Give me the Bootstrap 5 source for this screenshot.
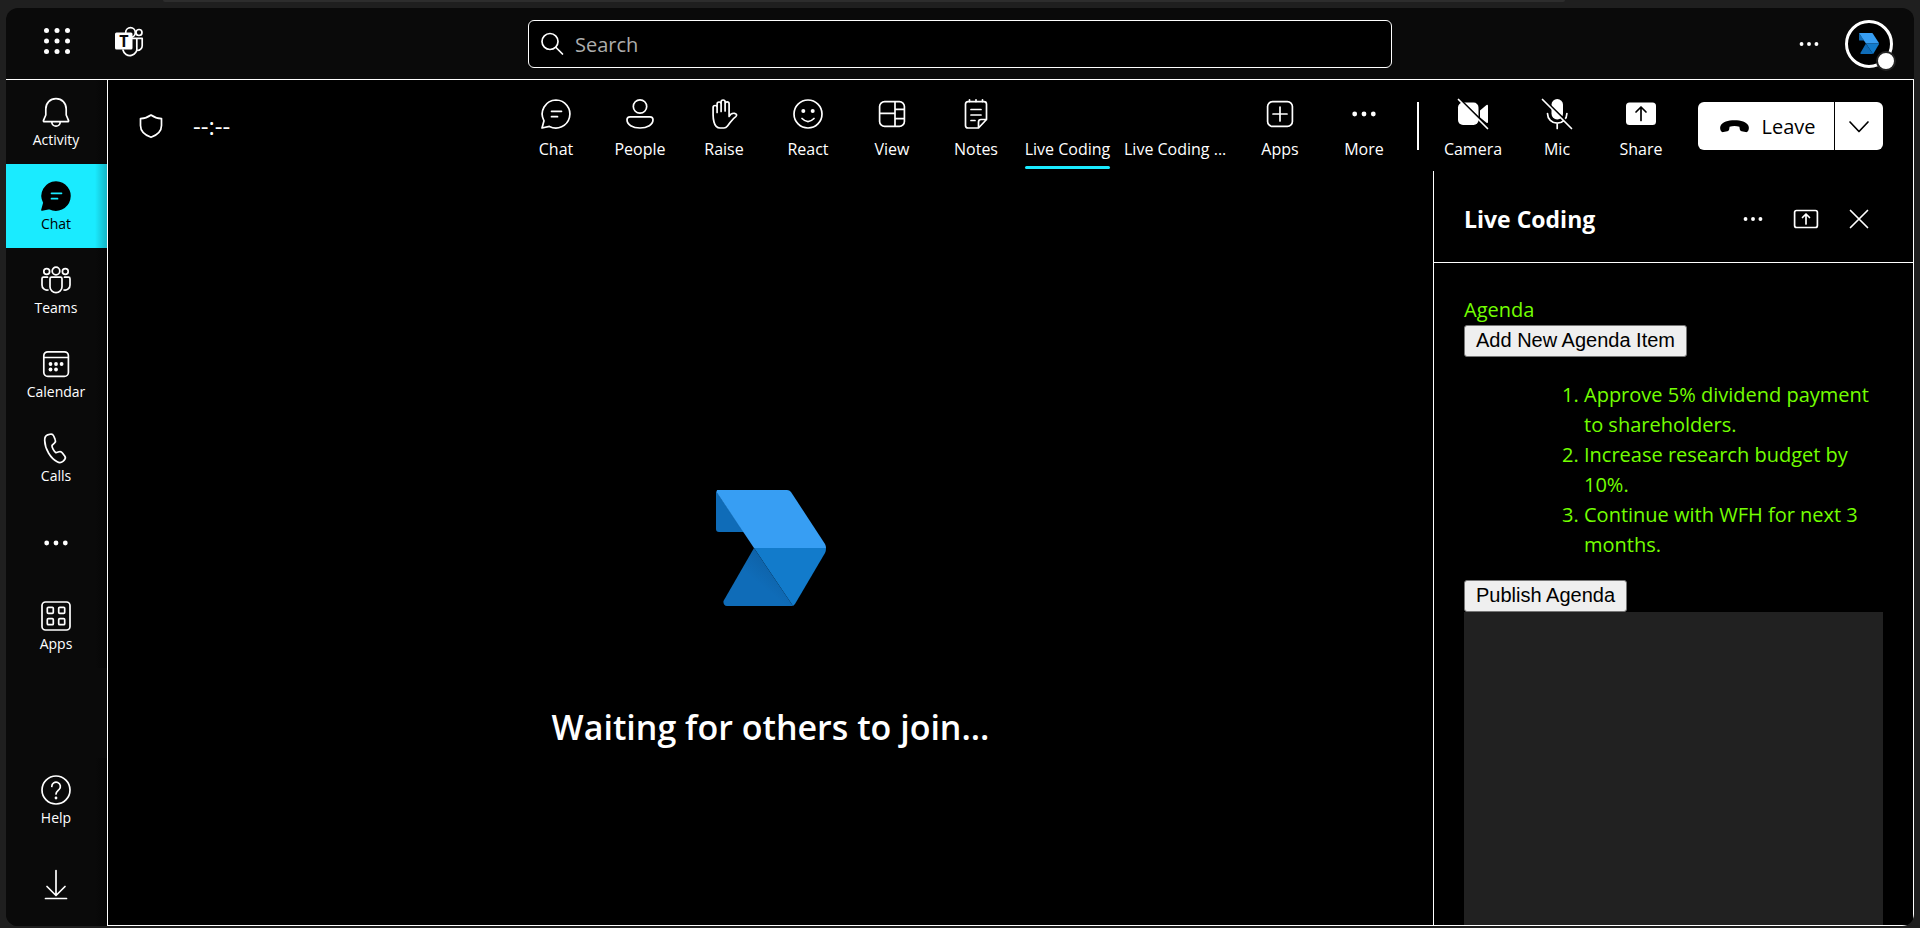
<!DOCTYPE html>
<html lang="en" data-bs-theme="dark">
<head>
<meta charset="utf-8">
<meta name="viewport" content="width=device-width, initial-scale=1">
<title>Live Coding meeting</title>
<link href="https://cdn.jsdelivr.net/npm/bootstrap@5.3.0/dist/css/bootstrap.min.css" rel="stylesheet">
<style>
  body { background: #1f1f1f; color: #fff; font-family: "Open Sans", "Noto Sans", sans-serif; font-size: 20px; line-height: 30px; }
  button { font-family: inherit; }
  svg { display: block; flex: none; }
  .ico { width: 30px; height: 30px; fill: none; stroke: currentColor; stroke-width: 1.7; stroke-linecap: round; stroke-linejoin: round; overflow: visible; }
  .ico .solid { fill: currentColor; stroke: none; }
  .ico-sm { width: 24px; height: 24px; }
  .plain { background: none; border: 0; padding: 0; color: inherit; }

  .window-strip { height: 2px; margin: 0 18.5% 6px 8.5%; background: #2d2d2d; border-radius: 0 0 8px 8px; }
  .app-window { margin: 0 6px 2px; background: #0a0a0a; border-radius: 12px; }

  .topbar { display: grid; grid-template-columns: 1fr auto 1fr; height: 72px; border-bottom: 1px solid #fff; }
  .topbar-start { padding: 0 0 6px 36px; gap: 42px; }
  .topbar-end { padding-right: 21px; gap: 24px; }
  .search-box { width: 864px; height: 48px; padding: 0 12px; gap: 10px; background: #000; border: 1px solid #fff; border-radius: 6px; }
  .search-box input { background: none; border: 0; outline: 0; color: #fff; padding: 2px 0 0; font-size: 20px; }
  .search-box input::placeholder { color: #adadad; opacity: 1; }
  .avatar { width: 48px; height: 48px; border: 3px solid #fff; border-radius: 50%; background: #000; }
  .presence { position: absolute; right: -6px; bottom: -6px; width: 20px; height: 20px; border-radius: 50%; background: #fff; border: 2px solid #242424; }

  .rail { width: 101px; }
  .rail-item { height: 84px; padding: 2px 1px 0 0; gap: 3px; color: #fff; font-size: 14px; line-height: 20px; text-decoration: none; background: linear-gradient(to left, #060606, #0a0a0a 12px); }
  .rail-item.active { color: #000; background: linear-gradient(to left, #15b5c5, #1aebff 12px); }

  .meeting { background: #000; border: 1px solid #fff; border-top: 0; }
  .toolbar { height: 91px; padding: 0 30px; }
  .status-info { gap: 30px; padding: 1px 0 0 1px; font-size: 24px; }
  .tool { width: 84px; height: 66px; gap: 10px; font-size: 16px; line-height: 20px; justify-content: flex-end; }
  .tool-tab { width: 99px; }
  .tool-tab-wide { width: 121px; padding-left: 7px; }
  .tool-tab.active span { position: relative; }
  .tool-tab.active span::after { content: ""; position: absolute; left: 0; right: 0; bottom: -10px; height: 3px; border-radius: 2px; background: #1aebff; }
  .tool-rule { width: 2px; height: 48px; margin: 0 12px 0 11px; background: #fff; }
  .leave-group { height: 48px; margin-left: 15px; gap: 1px; }
  .leave-btn { background: #fff; color: #000; font-size: 20px; font-weight: 500; }
  .leave-main { width: 136px; padding: 2px 0 0 4px; gap: 12px; border-radius: 6px 0 0 6px; }
  .leave-more { width: 48px; border-radius: 0 6px 6px 0; }

  .stage { display: grid; grid-template-rows: 1fr auto 1fr; justify-items: center; }
  .stage h1 { grid-row: 3; margin: 0; padding-top: 97px; font-size: 34px; line-height: 48px; font-weight: 600; }
  .stage-logo { grid-row: 2; width: 110px; height: 116px; }

  .side-panel { width: 480px; border-left: 1px solid #fff; }
  .panel-head { height: 92px; padding: 4px 42px 0 30px; border-bottom: 1px solid #fff; }
  .panel-head h2 { font-size: 23px; line-height: 30px; font-weight: 700; }
  .panel-tools { gap: 29px; }
  .panel-body { padding: 32px 30px 0; color: #73ff00; }
  .agenda-list { margin: 23px 0 20px; padding-left: 120px; }
  .doc-btn { align-self: flex-start; height: 32px; padding: 0 11px 2px; background: #efefef; color: #000; border: 1px solid #767676; border-radius: 3px; font-family: "Liberation Sans", Arial, sans-serif; font-size: 20px; line-height: 28px; }
  .result-pane { background: #212121; }
</style>
</head>
<body class="d-flex flex-column vh-100 overflow-hidden">

<svg width="0" height="0" class="position-absolute" aria-hidden="true">
  <defs>
    <linearGradient id="fold" x1="0" y1="1" x2="1" y2="0">
      <stop offset=".45" stop-color="#0f6cb8"/><stop offset="1" stop-color="#0d5797"/>
    </linearGradient>
    <symbol id="brand" viewBox="0 0 110 116">
      <path fill="url(#fold)" d="M0 1 28 42H3Q0 42 0 39Z"/>
      <path fill="#379ef3" d="M1 0H71Q73.500 0 75 2L109 54Q110 56 110 58H38L.500 2Z"/>
      <path fill="#127bcb" d="M38 58H110Q110 61 109 63L79 114 77 116Z"/>
      <path fill="url(#fold)" d="M38 58 77 116H11Q7 115.500 7.500 111Z"/>
    </symbol>
    <symbol id="dots" viewBox="0 0 30 30">
      <g fill="currentColor" stroke="none"><circle cx="5.700" cy="15" r="2.400"/><circle cx="15" cy="15" r="2.400"/><circle cx="24.300" cy="15" r="2.400"/></g>
    </symbol>
  </defs>
</svg>

<div class="window-strip flex-shrink-0"></div>
<div class="app-window d-flex flex-column flex-fill overflow-hidden">

  <header class="topbar align-items-center flex-shrink-0">
    <div class="topbar-start d-flex align-items-center">
      <button class="plain" aria-label="App launcher">
        <svg class="ico" viewBox="0 0 30 30"><g class="solid"><circle cx="4.500" cy="4.500" r="2.500"/><circle cx="15" cy="4.500" r="2.500"/><circle cx="25.500" cy="4.500" r="2.500"/><circle cx="4.500" cy="15" r="2.500"/><circle cx="15" cy="15" r="2.500"/><circle cx="25.500" cy="15" r="2.500"/><circle cx="4.500" cy="25.500" r="2.500"/><circle cx="15" cy="25.500" r="2.500"/><circle cx="25.500" cy="25.500" r="2.500"/></g></svg>
      </button>
      <svg class="ico" viewBox="0 0 30 30" role="img" aria-label="Teams">
        <circle cx="16.500" cy="6.500" r="4.800"/><circle cx="25" cy="6.500" r="3"/>
        <path d="M18 12.300h10.200v7.500a4.700 4.700 0 0 1-5 4.700M22.800 12.300v8.700a7 7 0 0 1-13.800 3"/>
        <rect x="1" y="6.500" width="17.500" height="17" rx="1.500" fill="#fff" stroke="none"/>
        <text x="10" y="20.500" text-anchor="middle" font-size="16" font-weight="700" font-family="Open Sans, sans-serif" fill="#0a0a0a" stroke="none">T</text>
      </svg>
    </div>
    <div class="search-box d-flex align-items-center">
      <svg class="ico ico-sm" viewBox="0 0 24 24"><circle cx="9" cy="9.500" r="8"/><path d="m15 15.500 6.500 6.500"/></svg>
      <input class="flex-fill" type="search" placeholder="Search" aria-label="Search">
    </div>
    <div class="topbar-end d-flex align-items-center justify-content-end">
      <button class="plain" aria-label="Settings and more"><svg class="ico ico-sm"><use href="#dots"/></svg></button>
      <button class="plain avatar position-relative d-flex align-items-center justify-content-center" aria-label="Account">
        <svg width="20" height="21"><use href="#brand"/></svg>
        <span class="presence"></span>
      </button>
    </div>
  </header>

  <div class="d-flex flex-fill overflow-hidden">
    <nav class="rail d-flex flex-column flex-shrink-0" aria-label="Apps">
      <a href="#" class="rail-item d-flex flex-column align-items-center justify-content-center">
        <svg class="ico" viewBox="0 0 30 30"><path d="M15 1.600C9 1.600 4.800 6 4.800 12v6L2.500 23.300c-.3.700.1 1.400.9 1.400h23.200c.8 0 1.200-.7.900-1.400L25.200 18v-6C25.200 6 21 1.600 15 1.600zM10.800 25a4.200 4.200 0 0 0 8.400 0"/></svg>
        Activity</a>
      <a href="#" class="rail-item active d-flex flex-column align-items-center justify-content-center" aria-current="page">
        <svg class="ico" viewBox="0 0 30 30"><path fill="#000" d="M15 1A14 14 0 1 1 8.400 27.400L1 29 3 21.800A14 14 0 0 1 15 1z"/><path stroke="#1aebff" d="M10.500 12.300h10M10.500 17.700h6"/></svg>
        Chat</a>
      <a href="#" class="rail-item d-flex flex-column align-items-center justify-content-center">
        <svg class="ico" viewBox="0 0 30 30"><circle cx="15" cy="6" r="3.800"/><circle cx="5.700" cy="6.500" r="2.900"/><circle cx="24.300" cy="6.500" r="2.900"/><path d="M10.500 12.200h9q1.500 0 1.500 1.500v8a6 6 0 0 1-12 0v-8q0-1.500 1.500-1.500zM6.500 12.200h-4q-1.500 0-1.500 1.500V20a5 5 0 0 0 6 5M23.500 12.200h4q1.500 0 1.500 1.500V20a5 5 0 0 1-6 5"/></svg>
        Teams</a>
      <a href="#" class="rail-item d-flex flex-column align-items-center justify-content-center">
        <svg class="ico" viewBox="0 0 30 30"><rect x="2.800" y="2.800" width="24.600" height="24.600" rx="4"/><path d="M3 8.500h24"/><g class="solid"><circle cx="9.500" cy="15" r="1.900"/><circle cx="15" cy="15" r="1.900"/><circle cx="20.600" cy="15" r="1.900"/><circle cx="9.500" cy="20.500" r="1.900"/><circle cx="15" cy="20.500" r="1.900"/></g></svg>
        Calendar</a>
      <a href="#" class="rail-item d-flex flex-column align-items-center justify-content-center">
        <svg class="ico" viewBox="0 0 30 30"><path d="M6.600 1.900 9 1.200c1.600-.5 3 .3 3.700 1.800l1.500 3.600c.6 1.300.2 2.600-.8 3.500l-2.400 2.200c-.4 1.800 1.900 6.200 3.900 7.400l3.100-.9c1.300-.4 2.600 0 3.400 1.100l2.300 3.200c.9 1.200.7 2.900-.4 3.900l-1.400 1.300c-1.700 1.500-3.900 1.500-5.700.5C9.800 25.500 4 16.500 3.700 7.500 3.600 4.800 4.600 2.600 6.600 1.900z"/></svg>
        Calls</a>
      <a href="#" class="rail-item d-flex flex-column align-items-center justify-content-center" aria-label="More apps">
        <svg class="ico"><use href="#dots"/></svg></a>
      <a href="#" class="rail-item d-flex flex-column align-items-center justify-content-center">
        <svg class="ico" viewBox="0 0 30 30"><rect x="1" y="1" width="28" height="28" rx="3.500"/><rect x="6.300" y="6.300" width="6" height="6" rx="1"/><rect x="17.700" y="6.300" width="6" height="6" rx="1"/><rect x="6.300" y="17.700" width="6" height="6" rx="1"/><rect x="17.700" y="17.700" width="6" height="6" rx="1"/></svg>
        Apps</a>
      <a href="#" class="rail-item mt-auto d-flex flex-column align-items-center justify-content-center">
        <svg class="ico" viewBox="0 0 30 30"><circle cx="15" cy="15" r="14"/><path d="M10.800 11.500a4.300 4.300 0 1 1 7.300 3C16 16.500 15 17.200 15 19"/><circle class="solid" cx="15" cy="23" r="1.400"/></svg>
        Help</a>
      <a href="#" class="rail-item d-flex flex-column align-items-center justify-content-center" aria-label="Download the desktop app">
        <svg class="ico" viewBox="0 0 30 30"><path d="M15 .5v24.500M6 16.500l9 9 9-9M4.500 28.500h21"/></svg></a>
    </nav>

    <main class="meeting d-flex flex-column flex-fill overflow-hidden">
      <div class="toolbar d-flex align-items-center flex-shrink-0">
        <div class="status-info d-flex align-items-center">
          <svg class="ico ico-sm" viewBox="0 0 24 24"><path d="M12 1Q16.500 4.300 22.500 4.600V11.500Q22.500 19.500 12 23.300 1.500 19.500 1.500 11.500V4.600Q7.500 4.300 12 1z"/></svg>
          <span>--:--</span>
        </div>
        <div class="d-flex align-items-center ms-auto">
          <button class="plain tool d-flex flex-column align-items-center">
            <svg class="ico" viewBox="0 0 30 30"><path d="M15 1A14 14 0 1 1 8.400 27.400L1 29 3 21.800A14 14 0 0 1 15 1zM10.500 12.300h10M10.500 17.700h6"/></svg>
            <span>Chat</span></button>
          <button class="plain tool d-flex flex-column align-items-center">
            <svg class="ico" viewBox="0 0 30 30"><circle cx="15" cy="7.500" r="6.700"/><path d="M5 17.800h20q3 0 3 3C28 25.500 22.500 29 15 29S2 25.500 2 20.800q0-3 3-3z"/></svg>
            <span>People</span></button>
          <button class="plain tool d-flex flex-column align-items-center">
            <svg class="ico" viewBox="0 0 30 30"><path d="M8.100 13.500V5a2 2 0 0 1 4 0V12.500M12.100 11.500V3a2 2 0 0 1 4 0V12M16.100 12V4.800a2 2 0 0 1 4 0V17.500C21 15.500 23 14 25.500 14.300c2.200.3 2.700 2.200 1.300 3.300C23 20 21.500 23.500 18.500 27c-1.200 1.500-2 2-3.500 2H11C7.500 29 6 27 5 23 4.200 20 4.100 18 4.100 16V8.500a2 2 0 0 1 4 0"/></svg>
            <span>Raise</span></button>
          <button class="plain tool d-flex flex-column align-items-center">
            <svg class="ico" viewBox="0 0 30 30"><circle cx="15" cy="15" r="14"/><path d="M9 19.500q6 6 12 0"/><circle class="solid" cx="10.300" cy="12" r="2"/><circle class="solid" cx="19.700" cy="12" r="2"/></svg>
            <span>React</span></button>
          <button class="plain tool d-flex flex-column align-items-center">
            <svg class="ico" viewBox="0 0 30 30"><rect x="2.600" y="2.600" width="24.800" height="24.800" rx="5"/><path d="M18 3v24M3 14.300h15M18 10.300h9M18 19.700h9"/></svg>
            <span>View</span></button>
          <button class="plain tool d-flex flex-column align-items-center">
            <svg class="ico" viewBox="0 0 30 30"><path d="M7 2.700h16q2.500 0 2.500 2.500V20.500L17.500 29H7q-2.500 0-2.500-2.500V5.200Q4.500 2.700 7 2.700zM25.500 20.500H20q-2.500 0-2.500 2.500v6M8.500.8v2M15 .8v2M21.500.8v2M10 10.500h10M10 16h10M10 21.500h4"/></svg>
            <span>Notes</span></button>
          <button class="plain tool tool-tab active d-flex flex-column align-items-center"><span>Live Coding</span></button>
          <button class="plain tool tool-tab-wide d-flex flex-column align-items-start"><span>Live Coding ...</span></button>
          <button class="plain tool d-flex flex-column align-items-center">
            <svg class="ico" viewBox="0 0 30 30"><rect x="2.600" y="2.600" width="24.800" height="24.800" rx="5"/><path d="M15 8v14M8 15h14"/></svg>
            <span>Apps</span></button>
          <button class="plain tool d-flex flex-column align-items-center">
            <svg class="ico"><use href="#dots"/></svg>
            <span>More</span></button>
          <div class="tool-rule"></div>
          <button class="plain tool d-flex flex-column align-items-center">
            <svg class="ico" viewBox="0 0 30 30"><rect class="solid" x="0" y="3.500" width="20.500" height="22.500" rx="5"/><path class="solid" d="M22 11.500 28.500 6q1.500-.8 1.500 1V23q0 1.500-1.500.8L22 18.500z"/><path d="M2 .5 31 29" stroke="#000" stroke-width="2.200"/><path d="M.5.500 29.500 29.500"/></svg>
            <span>Camera</span></button>
          <button class="plain tool d-flex flex-column align-items-center">
            <svg class="ico" viewBox="0 0 30 30"><rect class="solid" x="9.500" y="0" width="11.500" height="20.500" rx="5.700"/><path d="M5.500 14.500a9.700 9.700 0 0 0 19.400 0M15.200 24.500v5"/><path d="M2 .5 31 29" stroke="#000" stroke-width="2.200"/><path d="M.5.500 29.500 29.500"/></svg>
            <span>Mic</span></button>
          <button class="plain tool d-flex flex-column align-items-center">
            <svg class="ico" viewBox="0 0 30 30"><rect class="solid" x="0" y="3.500" width="30" height="22.500" rx="3.500"/><path d="M15 21.500V8.500M10 13l5-5 5 5" stroke="#000"/></svg>
            <span>Share</span></button>
          <div class="leave-group d-flex">
            <button class="plain leave-btn leave-main d-flex align-items-center justify-content-center">
              <svg width="29" height="13" viewBox="0 0 29 13"><path d="M14.500.3C21 .3 26.500 2 28.300 5.500c.9 1.800.7 4-.2 5.600-.5.900-1.500 1.200-2.600 1l-3.800-.8c-1.100-.2-1.700-.9-1.900-2l-.4-2.600c-3.200-1-6.600-1-9.800 0l-.4 2.600c-.2 1.100-.8 1.800-1.900 2l-3.800.8c-1.100.2-2.100-.1-2.600-1C0 9.500-.2 7.300.7 5.500 2.500 2 8 .3 14.500.3z"/></svg>
              Leave</button>
            <button class="plain leave-btn leave-more d-flex align-items-center justify-content-center" aria-label="Leave options">
              <svg class="ico ico-sm" viewBox="0 0 24 24"><path d="m3 8 9 9.500L21 8"/></svg></button>
          </div>
        </div>
      </div>

      <div class="d-flex flex-fill overflow-hidden">
        <section class="stage flex-fill">
          <svg class="stage-logo" role="img" aria-label="Participant picture"><use href="#brand"/></svg>
          <h1>Waiting for others to join...</h1>
        </section>
        <aside class="side-panel d-flex flex-column flex-shrink-0">
          <div class="panel-head d-flex align-items-center justify-content-between flex-shrink-0">
            <h2 class="m-0">Live Coding</h2>
            <div class="panel-tools d-flex align-items-center">
              <button class="plain" aria-label="More options"><svg class="ico ico-sm"><use href="#dots"/></svg></button>
              <button class="plain" aria-label="Share to meeting"><svg class="ico ico-sm" viewBox="0 0 24 24"><rect x=".6" y="3.500" width="22.800" height="17" rx="2"/><path d="M12 17V7M8.500 10.500 12 7l3.500 3.500"/></svg></button>
              <button class="plain" aria-label="Close"><svg class="ico ico-sm" viewBox="0 0 24 24"><path d="m3.500 3.500 17 17M20.500 3.500l-17 17"/></svg></button>
            </div>
          </div>
          <div class="panel-body d-flex flex-column flex-fill overflow-hidden">
            <div>Agenda</div>
            <button class="doc-btn flex-shrink-0">Add New Agenda Item</button>
            <ol class="agenda-list">
              <li>Approve 5% dividend payment to shareholders.</li>
              <li>Increase research budget by 10%.</li>
              <li>Continue with WFH for next 3 months.</li>
            </ol>
            <button class="doc-btn flex-shrink-0">Publish Agenda</button>
            <div class="result-pane flex-fill"></div>
          </div>
        </aside>
      </div>
    </main>
  </div>
</div>

<script src="https://cdn.jsdelivr.net/npm/bootstrap@5.3.0/dist/js/bootstrap.bundle.min.js"></script>
</body>
</html>
